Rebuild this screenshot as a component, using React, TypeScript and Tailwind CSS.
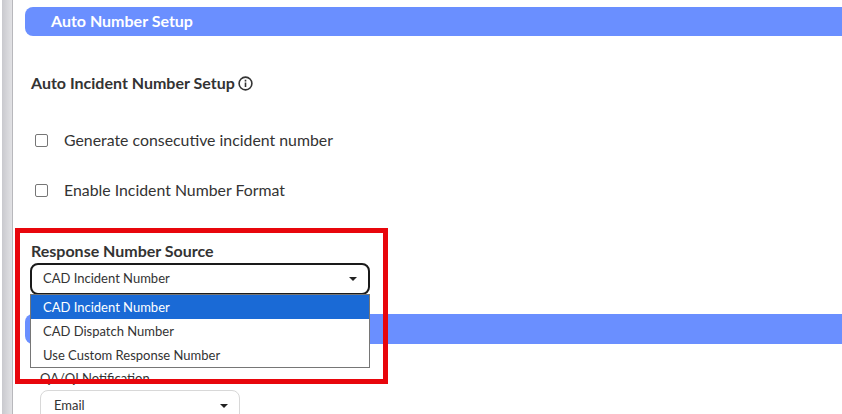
export default function App() {
  return (
    <div className="h-[414px] w-[842px] overflow-hidden bg-white font-['Lato',sans-serif] text-[#333] flex">
      <div className="ml-[2px] w-[11px] shrink-0 bg-gradient-to-r from-[#c9c9ce] to-[#e2e2e5] border-r border-[#b8b8bc]" />
      <div className="relative flex-1 pl-3 pt-[7px]">
        <h2 className="h-[29px] rounded-l-lg bg-[#6a8fff] pl-[26px] text-[16px] font-bold leading-[28px] text-white">Auto Number Setup</h2>

        <div className="mt-[35px] ml-[6px] flex h-6 items-center gap-[3px] text-[16px] font-bold">
          Auto Incident Number Setup
          <svg width="15" height="15" viewBox="0 0 15 15" fill="none" stroke="#333" strokeWidth="1.6">
            <circle cx="7.5" cy="7.5" r="6.4" />
            <path d="M7.5 6.5v4.5M7.5 3.8v1.6" />
          </svg>
        </div>

        <label className="mt-[33px] ml-[10px] flex h-6 items-center gap-[16px] text-[15.85px]">
          <span className="h-[13px] w-[13px] rounded-[2px] border border-[#767676] bg-white" />
          Generate consecutive incident number
        </label>
        <label className="mt-[26px] ml-[10px] flex h-6 items-center gap-[16px] text-[15.85px]">
          <span className="h-[13px] w-[13px] rounded-[2px] border border-[#767676] bg-white" />
          Enable Incident Number Format
        </label>

        <div className="mt-[39px] ml-[6px] h-[22px] text-[16px] font-bold leading-[20px]">Response Number Source</div>
        <div className="ml-[5px] flex h-[32px] w-[340px] items-center justify-between rounded-lg border-2 border-[#1a1a1a] pl-[11px] pr-[11px] text-[13px]">
          CAD Incident Number
          <span className="h-0 w-0 border-x-[4px] border-t-[4px] border-x-transparent border-t-[#222]" />
        </div>

        <div className="mt-[19px] h-[30px] rounded-l-lg bg-[#6a8fff]" />

        <div className="ml-[15px] mt-[26px] text-[13px] leading-4">QA/QI Notification</div>
        <div className="ml-[15px] mt-[4px] flex h-[32px] w-[200px] items-center justify-between rounded-lg border border-[#d8d8d8] pl-[13px] pr-[11px] text-[13px]">
          Email
          <span className="h-0 w-0 border-x-[4px] border-t-[4px] border-x-transparent border-t-[#222]" />
        </div>

        {/* open select list and the annotation box lie over the form */}
        <div className="absolute left-[17px] top-[294px] w-[340px] border border-[#767676] bg-white text-[13px] leading-6">
          <div className="bg-[#1a6ad6] pl-[12px] text-white">CAD Incident Number</div>
          <div className="pl-[12px]">CAD Dispatch Number</div>
          <div className="pl-[12px]">Use Custom Response Number</div>
        </div>
        <div className="absolute left-[2px] top-[228px] h-[156px] w-[373px] border-[5px] border-[#e8060c]" />
      </div>
    </div>
  );
}
